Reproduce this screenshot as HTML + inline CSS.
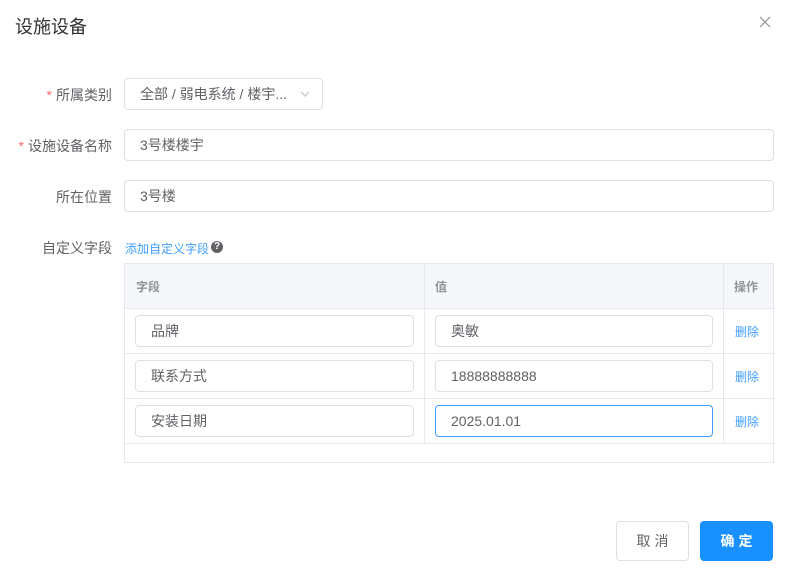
<!DOCTYPE html>
<html><head><meta charset="utf-8"><style>
*{box-sizing:border-box;margin:0;padding:0}
body{width:790px;height:575px;background:#fff;font-family:"Liberation Sans","Noto Sans CJK SC",sans-serif;color:#606266;position:relative;overflow:hidden;font-size:14px}
.a{position:absolute}
.title{left:15px;top:13px;font-size:18px;color:#303133}
.close{left:759px;top:16px;width:12px;height:12px}
.lbl{right:678px;text-align:right;font-size:14px;color:#606266;white-space:nowrap}
.lbl b{color:#f56c6c;font-weight:normal;margin-right:4px}
.inp{border:1px solid #dcdfe6;border-radius:4px;height:32px;line-height:30px;padding-left:15px;font-size:14px;color:#606266;background:#fff}
.tbl{left:124px;top:263px;width:650px;height:200px;border:1px solid #e4e7ed}
.hd{left:0;top:0;width:648px;height:45px;background:#f5f7fa;border-bottom:1px solid #e4e7ed}
.vl{top:0;width:1px;height:180px;background:#e4e7ed}
.hl{left:0;width:648px;height:1px;background:#e4e7ed}
.ht{top:14px;font-size:12px;color:#909399;font-weight:bold}
.del{left:610px;font-size:12px;color:#409eff}
.btn{top:521px;height:40px;width:73px;border-radius:4px;text-align:center;line-height:38px;font-size:14px;letter-spacing:4px;padding-left:4px}
</style></head><body>
<div class="a title">设施设备</div>
<svg class="a close" viewBox="0 0 12 12"><path d="M1 1L11 11M11 1L1 11" stroke="#909399" stroke-width="1.2"/></svg>

<div class="a lbl" style="top:85px"><b>*</b>所属类别</div>
<div class="a inp" style="left:124px;top:78px;width:199px">全部 / 弱电系统 / 楼宇...</div>
<svg class="a" style="left:299px;top:88px" width="12" height="12" viewBox="0 0 12 12"><path d="M2 4L6 8L10 4" fill="none" stroke="#c0c4cc" stroke-width="1.2"/></svg>

<div class="a lbl" style="top:136px"><b>*</b>设施设备名称</div>
<div class="a inp" style="left:124px;top:129px;width:650px">3号楼楼宇</div>

<div class="a lbl" style="top:187px">所在位置</div>
<div class="a inp" style="left:124px;top:180px;width:650px">3号楼</div>

<div class="a lbl" style="top:238px">自定义字段</div>
<div class="a" style="left:125px;top:240px;font-size:12px;color:#409eff">添加自定义字段</div>
<div class="a" style="left:211px;top:241px;width:12px;height:12px;border-radius:50%;background:#606266;color:#fff;font-size:10px;line-height:12px;text-align:center;font-weight:bold">?</div>

<div class="a tbl">
 <div class="a hd"></div>
 <div class="a vl" style="left:299px"></div>
 <div class="a vl" style="left:598px"></div>
 <div class="a hl" style="top:89px"></div>
 <div class="a hl" style="top:134px"></div>
 <div class="a hl" style="top:179px"></div>
 <div class="a ht" style="left:11px">字段</div>
 <div class="a ht" style="left:310px">值</div>
 <div class="a ht" style="left:609px">操作</div>

 <div class="a inp" style="left:10px;top:51px;width:279px">品牌</div>
 <div class="a inp" style="left:310px;top:51px;width:278px">奥敏</div>
 <div class="a del" style="top:59px">删除</div>

 <div class="a inp" style="left:10px;top:96px;width:279px">联系方式</div>
 <div class="a inp" style="left:310px;top:96px;width:278px">18888888888</div>
 <div class="a del" style="top:104px">删除</div>

 <div class="a inp" style="left:10px;top:141px;width:279px">安装日期</div>
 <div class="a inp" style="left:310px;top:141px;width:278px;border-color:#409eff">2025.01.01</div>
 <div class="a del" style="top:149px">删除</div>
</div>

<div class="a btn" style="left:616px;border:1px solid #dcdfe6;color:#606266">取消</div>
<div class="a btn" style="left:700px;background:#1890ff;border:1px solid #1890ff;color:#fff;font-weight:bold">确定</div>
</body></html>
